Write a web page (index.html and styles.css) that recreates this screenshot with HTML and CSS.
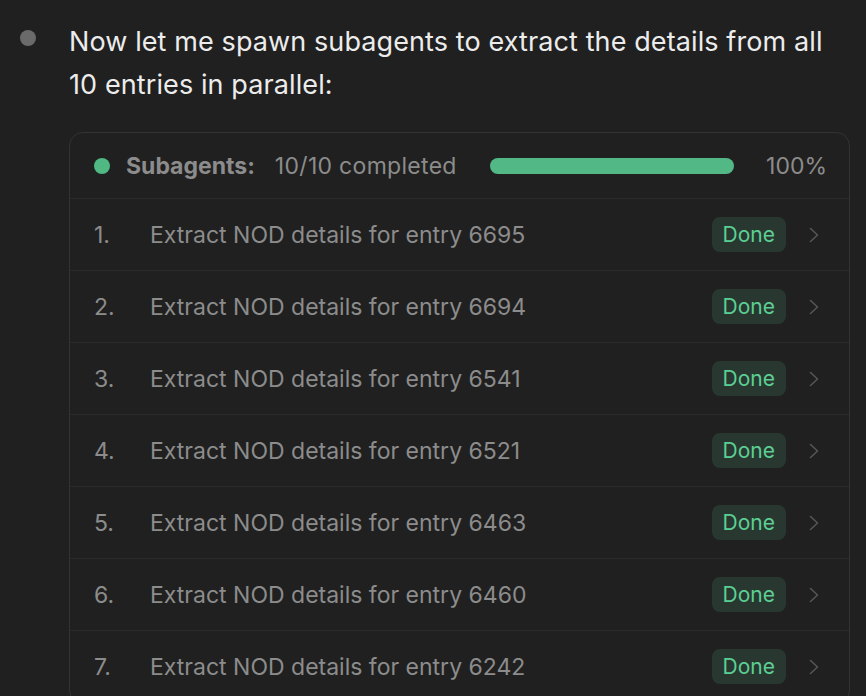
FILE: index.html
```html
<!DOCTYPE html>
<html lang="en">
<head>
  <meta charset="UTF-8" />
  <meta name="viewport" content="width=device-width, initial-scale=1.0"/>
  <title>Subagents</title>
  <link rel="stylesheet" href="styles.css">
</head>
<body>
  <div class="message">
    <span class="bullet"></span>
    <div class="message-body">
      <p class="message-text">Now let me spawn subagents to extract the details from all 10 entries in parallel:</p>

      <div class="subagents">
        <div class="subagents-head">
          <span class="status-dot"></span>
          <span class="head-label">Subagents:</span>
          <span class="head-count">10/10 completed</span>
          <div class="progress"><div class="progress-fill" style="width: 100%"></div></div>
          <span class="head-pct">100%</span>
        </div>

        <div class="task">
          <span class="task-num">1.</span>
          <span class="task-name">Extract NOD details for entry 6695</span>
          <span class="badge">Done</span>
          <svg class="chevron" viewBox="0 0 12 20"><path d="M3.5 3.5l7 6.5-7 6.5"/></svg>
        </div>
        <div class="task">
          <span class="task-num">2.</span>
          <span class="task-name">Extract NOD details for entry 6694</span>
          <span class="badge">Done</span>
          <svg class="chevron" viewBox="0 0 12 20"><path d="M3.5 3.5l7 6.5-7 6.5"/></svg>
        </div>
        <div class="task">
          <span class="task-num">3.</span>
          <span class="task-name">Extract NOD details for entry 6541</span>
          <span class="badge">Done</span>
          <svg class="chevron" viewBox="0 0 12 20"><path d="M3.5 3.5l7 6.5-7 6.5"/></svg>
        </div>
        <div class="task">
          <span class="task-num">4.</span>
          <span class="task-name">Extract NOD details for entry 6521</span>
          <span class="badge">Done</span>
          <svg class="chevron" viewBox="0 0 12 20"><path d="M3.5 3.5l7 6.5-7 6.5"/></svg>
        </div>
        <div class="task">
          <span class="task-num">5.</span>
          <span class="task-name">Extract NOD details for entry 6463</span>
          <span class="badge">Done</span>
          <svg class="chevron" viewBox="0 0 12 20"><path d="M3.5 3.5l7 6.5-7 6.5"/></svg>
        </div>
        <div class="task">
          <span class="task-num">6.</span>
          <span class="task-name">Extract NOD details for entry 6460</span>
          <span class="badge">Done</span>
          <svg class="chevron" viewBox="0 0 12 20"><path d="M3.5 3.5l7 6.5-7 6.5"/></svg>
        </div>
        <div class="task">
          <span class="task-num">7.</span>
          <span class="task-name">Extract NOD details for entry 6242</span>
          <span class="badge">Done</span>
          <svg class="chevron" viewBox="0 0 12 20"><path d="M3.5 3.5l7 6.5-7 6.5"/></svg>
        </div>
      </div>
    </div>
  </div>
</body>
</html>
```

FILE: styles.css
```css
body {
  margin: 0;
  font-family: Inter, "Noto Sans", sans-serif;
  background-color: #202020;
  color: #e6e6e6;
  overflow: hidden;
}

.message {
  display: flex;
  padding: 20px 16px 0 20px;
  gap: 33px;
}

.bullet {
  flex: none;
  width: 16px;
  height: 16px;
  margin-top: 10px;
  border-radius: 50%;
  background-color: #6a6a6a;
}

.message-body {
  flex: 1;
}

.message-text {
  margin: 0 0 26px;
  font-size: 27px;
  line-height: 43px;
  letter-spacing: 0.1px;
  color: #ececec;
}

.subagents {
  border: 1px solid #333;
  border-radius: 14px;
}

.subagents-head {
  display: flex;
  align-items: center;
  height: 65px;
  padding: 0 22px 0 24px;
  font-size: 23px;
  color: #8c8c8c;
  border-bottom: 1px solid #2b2b2b;
}

.status-dot {
  width: 16px;
  height: 16px;
  border-radius: 50%;
  background-color: #4fb883;
  margin-right: 16px;
}

.head-label {
  font-weight: 700;
  margin-right: 20px;
}

.head-count {
  letter-spacing: 0.3px;
}

.progress {
  flex: 1;
  height: 16px;
  margin: 0 32px 0 33px;
  border-radius: 8px;
  background-color: #2e2e2e;
}

.progress-fill {
  height: 100%;
  border-radius: 8px;
  background-color: #52b886;
}

.task {
  display: flex;
  align-items: center;
  height: 71px;
  padding: 0 30px 0 24px;
  font-size: 23px;
  color: #8c8c8c;
  border-bottom: 1px solid #2b2b2b;
}

.task-num {
  width: 56px;
}

.task-name {
  flex: 1;
}

.badge {
  padding: 5px 11px;
  border-radius: 8px;
  background-color: #283830;
  color: #5ccf94;
  font-size: 21px;
}

.chevron {
  width: 12px;
  height: 20px;
  margin-left: 21px;
  fill: none;
  stroke: #555;
  stroke-width: 1.6;
  stroke-linecap: round;
  stroke-linejoin: round;
}
```
